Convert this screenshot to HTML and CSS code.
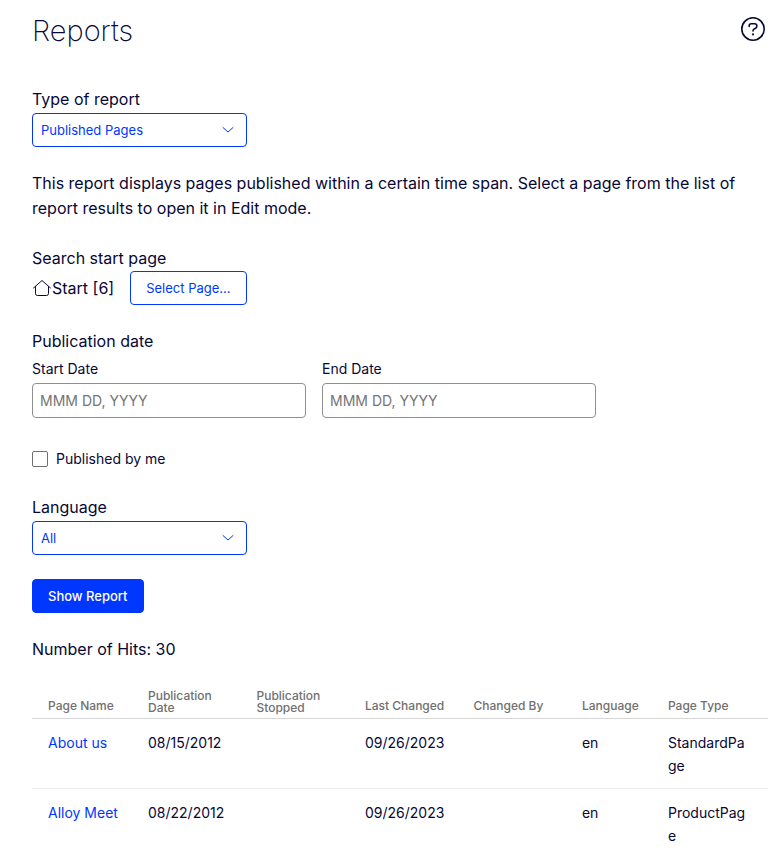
FILE: index.html
```html
<!DOCTYPE html>
<html lang="en">
<head>
<meta charset="utf-8">
<meta name="viewport" content="width=device-width, initial-scale=1">
<title>Reports</title>
<link rel="stylesheet" href="styles.css">
</head>
<body>
<main class="page">
  <header class="page-header">
    <h1 class="title">Reports</h1>
    <button class="help" type="button" aria-label="Help">
      <svg width="26" height="26" viewBox="0 0 26 26" fill="none" stroke="currentColor" stroke-width="1.6" stroke-linecap="round" stroke-linejoin="round"><circle cx="13" cy="13" r="11.2"/><path d="M9.2 10.4V9.8Q9.2 7.8 11.3 7.8H14.6Q16.8 7.8 16.8 9.8V10.2Q16.8 11.5 15.6 12.2L14 13.1Q13 13.7 13 15"/><path d="M13 18.2V18.4" stroke-width="2"/></svg>
    </button>
  </header>

  <form class="report-form">
    <div class="field">
      <label class="label" for="type">Type of report</label>
      <div class="select-box">
        <select id="type" class="select"><option>Published Pages</option></select>
        <svg class="chevron" width="12" height="8" viewBox="0 0 12 8" fill="none" stroke="currentColor" stroke-linecap="round" stroke-linejoin="round"><path d="M1 1.5L6 6L11 1.5"/></svg>
      </div>
    </div>

    <p class="description">This report displays pages published within a certain time span. Select a page from the list of report results to open it in Edit mode.</p>

    <div class="field">
      <span class="label">Search start page</span>
      <div class="start-page">
        <span class="start-name">
          <svg width="20" height="20" viewBox="0 0 20 20" fill="none" stroke="currentColor" stroke-linecap="round" stroke-linejoin="round"><path d="M1.5 10L10 2.5L18.5 10M3.5 8.5V15.5Q3.5 17.5 5.5 17.5H14.5Q16.5 17.5 16.5 15.5V8.5"/></svg>Start [6]
        </span>
        <button class="button button-outline" type="button">Select Page...</button>
      </div>
    </div>

    <fieldset class="dates">
      <legend class="label">Publication date</legend>
      <div class="date-row">
        <div class="date">
          <label for="start">Start Date</label>
          <input id="start" class="input" type="text" placeholder="MMM DD, YYYY">
        </div>
        <div class="date">
          <label for="end">End Date</label>
          <input id="end" class="input" type="text" placeholder="MMM DD, YYYY">
        </div>
      </div>
    </fieldset>

    <label class="check"><input class="checkbox" type="checkbox">Published by me</label>

    <div class="field">
      <label class="label" for="language">Language</label>
      <div class="select-box">
        <select id="language" class="select"><option>All</option></select>
        <svg class="chevron" width="12" height="8" viewBox="0 0 12 8" fill="none" stroke="currentColor" stroke-linecap="round" stroke-linejoin="round"><path d="M1 1.5L6 6L11 1.5"/></svg>
      </div>
    </div>

    <button class="button button-primary" type="submit">Show Report</button>
  </form>

  <p class="hits">Number of Hits: 30</p>

  <table class="results">
    <colgroup>
      <col class="col-name"><col class="col-wide"><col class="col-wide"><col class="col-wide"><col class="col-wide"><col class="col-language"><col>
    </colgroup>
    <thead>
      <tr>
        <th>Page Name</th><th class="two-line">Publication Date</th><th class="two-line">Publication Stopped</th><th>Last Changed</th><th>Changed By</th><th>Language</th><th>Page Type</th>
      </tr>
    </thead>
    <tbody>
      <tr>
        <td><a href="#about">About us</a></td><td>08/15/2012</td><td></td><td>09/26/2023</td><td></td><td>en</td><td>StandardPage</td>
      </tr>
      <tr>
        <td><a href="#meet">Alloy Meet</a></td><td>08/22/2012</td><td></td><td>09/26/2023</td><td></td><td>en</td><td>ProductPage</td>
      </tr>
    </tbody>
  </table>
</main>
</body>
</html>
```

FILE: styles.css
```css
* { box-sizing: border-box; }

body {
  margin: 0;
  background: #fff;
  color: #080736;
  font: 16px/25px Inter, "Liberation Sans", sans-serif;
}

button, input, select { font-family: inherit; }

.page { padding: 12px 16px 0 32px; }

.page-header {
  display: flex;
  justify-content: space-between;
  align-items: flex-start;
  margin-bottom: 36px;
}

.title {
  margin: 0;
  font-size: 29px;
  line-height: 38px;
  font-weight: 200;
}

.help {
  display: flex;
  margin: 4px 2px 0 0;
  padding: 0;
  border: 0;
  background: none;
  color: inherit;
}

.report-form {
  display: flex;
  flex-direction: column;
  align-items: flex-start;
}

.field {
  display: flex;
  flex-direction: column;
  margin-bottom: 24px;
}

.label {
  padding: 0;
  line-height: 25px;
}

.field .label { margin-top: 1px; }

.select-box {
  display: grid;
  align-items: center;
  width: 215px;
  margin-top: 1px;
  color: #0037ff;
}

.select-box > * { grid-area: 1 / 1; }

.select {
  appearance: none;
  width: 100%;
  height: 34px;
  padding: 0 32px 0 8px;
  border: 1px solid #0037ff;
  border-radius: 4px;
  background: #fff;
  color: inherit;
  font-size: 13px;
}

.chevron {
  justify-self: end;
  margin-right: 13px;
  pointer-events: none;
}

.description { margin: 0 0 24px; }

.start-page {
  display: flex;
  align-items: center;
  gap: 16px;
}

.start-name {
  display: flex;
  align-items: center;
}

.button {
  height: 34px;
  padding: 0 15px;
  border: 1px solid #0037ff;
  border-radius: 4px;
  font-size: 13px;
}

.button-outline {
  background: #fff;
  color: #0037ff;
}

.button-primary {
  background: #0037ff;
  color: #fff;
  font-weight: 500;
}

.dates {
  margin: 0 0 32px;
  padding: 0;
  border: 0;
}

.date-row {
  display: flex;
  flex-wrap: wrap;
  gap: 16px;
}

.date {
  display: flex;
  flex-direction: column;
  width: 274px;
  font-size: 14px;
  line-height: 29px;
}

.input {
  height: 35px;
  padding: 0 7px;
  border: 1px solid #8f8f8f;
  border-radius: 4px;
  background: #fff;
  color: inherit;
  font-size: 14px;
}

.input::placeholder { color: #757575; }

.check {
  display: flex;
  align-items: center;
  gap: 8px;
  margin-bottom: 26px;
  font-size: 14px;
  line-height: 18px;
}

.checkbox {
  appearance: none;
  width: 16px;
  height: 16px;
  margin: 0;
  border: 1px solid #707070;
  border-radius: 2px;
}

.checkbox:checked { background: #0037ff; }

.hits { margin: 24px 0; }

.results {
  width: 100%;
  table-layout: fixed;
  border-collapse: separate;
  border-spacing: 0;
  font-size: 14px;
  line-height: 23px;
}

.col-name { width: 14.13%; }
.col-wide { width: 14.74%; }
.col-language { width: 11.69%; }

.results th,
.results td {
  padding: 12px;
  text-align: left;
  vertical-align: top;
  overflow-wrap: anywhere;
}

.results tr > :first-child { padding-left: 16px; }
.results tr > :last-child { padding-right: 16px; }

.results th {
  padding-top: 4px;
  padding-bottom: 4px;
  border-bottom: 1px solid #d6d6d6;
  color: #707070;
  font-size: 12px;
  line-height: 16px;
  font-weight: 500;
  vertical-align: bottom;
}

.results .two-line { line-height: 12px; }

.results td {
  padding-bottom: 11px;
  border-bottom: 1px solid #ebebeb;
}

a {
  color: #0037ff;
  text-decoration: none;
}
```
